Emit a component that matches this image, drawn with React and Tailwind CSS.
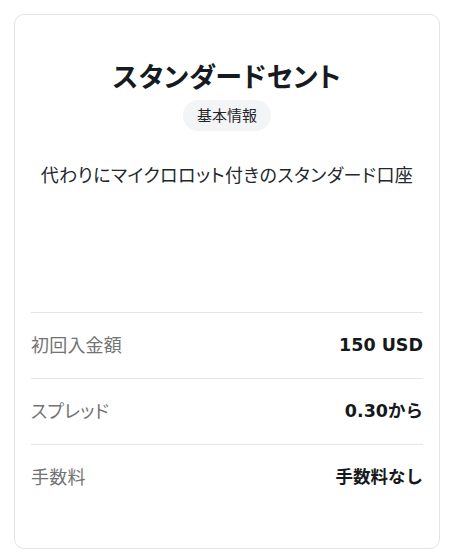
export default function App() {
  const rows = [
    { label: '初回入金額', value: '150 USD' },
    { label: 'スプレッド', value: '0.30から' },
    { label: '手数料', value: '手数料なし' },
  ];

  return (
    <div
      className="w-[460px] h-[558px] bg-white pt-[14px] pl-[14px]"
      style={{ fontFamily: '"Noto Sans", "Noto Sans CJK JP", sans-serif' }}
    >
      <div className="w-[426px] h-[535px] rounded-[10px] border border-[#e2e4e7] bg-white flex flex-col px-4">
        <div className="flex flex-col items-center pt-[44px]">
          <h2 className="text-[27px] leading-[36px] font-bold text-[#161b1f] tracking-[0.5px] [font-feature-settings:'palt']">
            スタンダードセント
          </h2>
          <span className="mt-[5px] h-[31px] px-[14px] flex items-center rounded-full bg-[#f3f4f6] text-[15px] text-[#1f2428]">
            基本情報
          </span>
          <p className="mt-[32px] text-[18px] leading-[24px] text-[#22272b] tracking-[0.45px] [font-feature-settings:'palt']">
            代わりにマイクロロット付きのスタンダード口座
          </p>
        </div>

        <div className="flex-1" />

        <div className="pb-[38px]">
          {rows.map((row, i) => (
            <div
              key={i}
              className="h-[66px] flex items-center justify-between border-t border-[#e4e6e8]"
            >
              <span className="text-[18px] text-[#737373] tracking-[0.2px] [font-feature-settings:'palt']">{row.label}</span>
              <span
                className="text-[17.5px] font-bold text-[#15191c]"
                style={{ fontFamily: '"DejaVu Sans", "Noto Sans CJK JP", sans-serif' }}
              >
                {row.value}
              </span>
            </div>
          ))}
        </div>
      </div>
    </div>
  );
}
